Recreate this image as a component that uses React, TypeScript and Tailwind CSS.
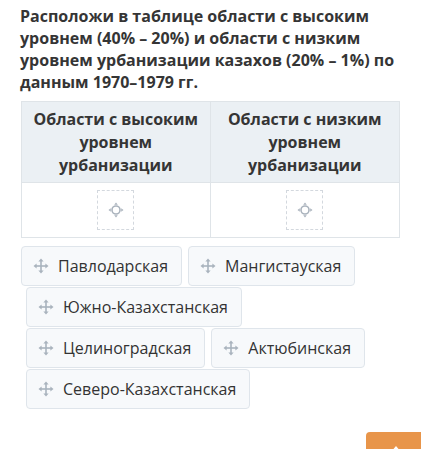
const MoveIcon = () => (
  <svg width="16" height="16" viewBox="0 0 16 16" className="shrink-0 text-[#a9b3bd]" fill="currentColor">
    <rect x="7.2" y="2.5" width="1.6" height="11" />
    <rect x="2.5" y="7.2" width="11" height="1.6" />
    <path d="M8 0.5 L10.6 3.6 H5.4 Z" />
    <path d="M8 15.5 L10.6 12.4 H5.4 Z" />
    <path d="M0.5 8 L3.6 5.4 V10.6 Z" />
    <path d="M15.5 8 L12.4 5.4 V10.6 Z" />
  </svg>
);

const DropSlot = () => (
  <div className="w-[37px] h-[40px] border border-dashed border-[#d3d8de] flex items-center justify-center">
    <svg width="16" height="16" viewBox="0 0 16 16" className="text-[#aab3bd]">
      <circle cx="8" cy="8" r="4" fill="none" stroke="currentColor" strokeWidth="1.6" />
      <path d="M8 0.5 L9.8 2.8 H6.2 Z M8 15.5 L9.8 13.2 H6.2 Z M0.5 8 L2.8 6.2 V9.8 Z M15.5 8 L13.2 6.2 V9.8 Z" fill="currentColor" />
    </svg>
  </div>
);

type ChipProps = { label: string };

const Chip = ({ label }: ChipProps) => (
  <div className="h-[40px] flex items-center gap-[9px] pl-[11px] pr-[13px] bg-[#f7f9fb] border border-[#dfe5eb] rounded-[4px] text-[16px] text-[#333]">
    <MoveIcon />
    <span>{label}</span>
  </div>
);

export default function App() {
  return (
    <div className="relative w-[421px] h-[449px] bg-white overflow-hidden" style={{ fontFamily: '"Open Sans", "Noto Sans", sans-serif' }}>
      <div className="pl-[20px] pr-[10px] pt-[5px]">
        <p className="text-[16px] leading-[22px] font-bold text-[#353535]">
          Расположи в таблице области с высоким уровнем (40% – 20%) и области с низким уровнем урбанизации казахов (20% – 1%) по данным 1970–1979 гг.
        </p>
      </div>

      <div className="ml-[21px] mt-[8px] w-[379px] border border-[#dfe4e8]">
        <div className="grid grid-cols-2 bg-[#ebf0f4] border-b border-[#dfe4e8]">
          <div className="h-[80px] flex items-center justify-center text-center px-[8px] text-[16px] leading-[23px] font-bold text-[#353535] border-r border-[#dfe4e8]">
            Области с высоким уровнем урбанизации
          </div>
          <div className="h-[80px] flex items-center justify-center text-center px-[8px] text-[16px] leading-[23px] font-bold text-[#353535]">
            Области с низким уровнем урбанизации
          </div>
        </div>
        <div className="grid grid-cols-2">
          <div className="h-[54px] flex items-center justify-center border-r border-[#dfe4e8]">
            <DropSlot />
          </div>
          <div className="h-[54px] flex items-center justify-center">
            <DropSlot />
          </div>
        </div>
      </div>

      <div className="mt-[8px] flex flex-col gap-[1px]">
        <div className="flex gap-[6px] pl-[21px]">
          <Chip label="Павлодарская" />
          <Chip label="Мангистауская" />
        </div>
        <div className="flex gap-[6px] pl-[26px]">
          <Chip label="Южно-Казахстанская" />
        </div>
        <div className="flex gap-[6px] pl-[26px]">
          <Chip label="Целиноградская" />
          <Chip label="Актюбинская" />
        </div>
        <div className="flex gap-[6px] pl-[26px]">
          <Chip label="Северо-Казахстанская" />
        </div>
      </div>

      <div className="absolute left-[366px] top-[432px] w-[60px] h-[30px] bg-[#e8954a] rounded-tl-[4px] flex justify-center pt-[14px]">
        <svg width="10" height="6" viewBox="0 0 10 6">
          <path d="M5 0 L10 6 H0 Z" fill="white" />
        </svg>
      </div>
    </div>
  );
}
